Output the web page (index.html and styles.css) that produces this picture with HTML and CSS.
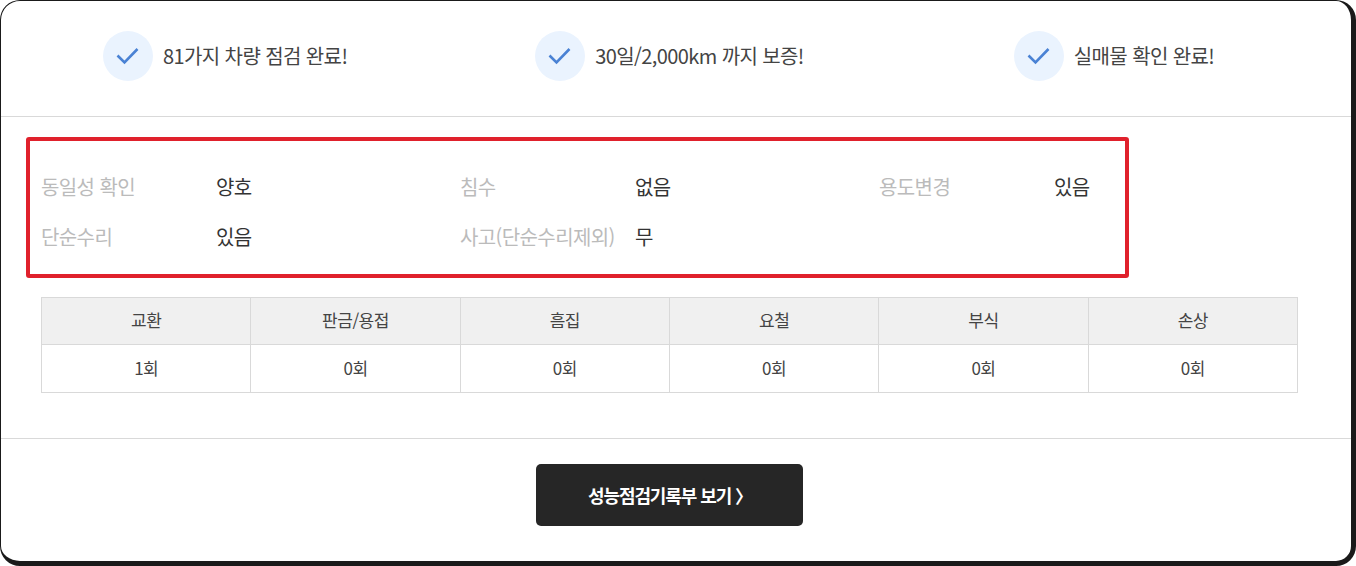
FILE: index.html
```html
<!DOCTYPE html>
<html lang="ko">
<head>
<meta charset="utf-8">
<title>성능점검</title>
<link rel="stylesheet" href="styles.css">
</head>
<body>
<div class="card">
  <div class="checks">
    <div class="check check-a"><span class="tick"><svg width="24" height="18" viewBox="0 0 24 18"><path d="M1.5 8.5l7 7L21.5 2" fill="none" stroke="#4a82d4" stroke-width="2.6"/></svg></span><span>81가지 차량 점검 완료!</span></div>
    <div class="check check-b"><span class="tick"><svg width="24" height="18" viewBox="0 0 24 18"><path d="M1.5 8.5l7 7L21.5 2" fill="none" stroke="#4a82d4" stroke-width="2.6"/></svg></span><span>30일/2,000km 까지 보증!</span></div>
    <div class="check check-c"><span class="tick"><svg width="24" height="18" viewBox="0 0 24 18"><path d="M1.5 8.5l7 7L21.5 2" fill="none" stroke="#4a82d4" stroke-width="2.6"/></svg></span><span>실매물 확인 완료!</span></div>
  </div>
  <div class="detail">
    <div class="highlight"></div>
    <dl class="facts">
      <div class="fact"><dt>동일성 확인</dt><dd>양호</dd></div>
      <div class="fact"><dt>침수</dt><dd>없음</dd></div>
      <div class="fact"><dt>용도변경</dt><dd>있음</dd></div>
      <div class="fact"><dt>단순수리</dt><dd>있음</dd></div>
      <div class="fact"><dt>사고(단순수리제외)</dt><dd>무</dd></div>
    </dl>
    <table class="parts">
      <tr><th>교환</th><th>판금/용접</th><th>흠집</th><th>요철</th><th>부식</th><th>손상</th></tr>
      <tr><td>1회</td><td>0회</td><td>0회</td><td>0회</td><td>0회</td><td>0회</td></tr>
    </table>
  </div>
  <div class="action"><a class="report" href="#">성능점검기록부 보기 〉</a></div>
</div>
</body>
</html>
```
FILE: styles.css
```css
* { box-sizing: border-box; }
html, body { margin: 0; padding: 0; }
body { background: #fff; font-family: "Noto Sans CJK KR", "Noto Sans", sans-serif; color: #222; }
.card {
  width: 1356px; height: 566px;
  border: solid #1a1a1a; border-width: 1px 5px 5px 1px;
  border-radius: 20px;
  background: #fff;
  overflow: hidden;
}
.checks {
  display: flex; align-items: center;
  height: 116px; padding: 0 0 6px 102px;
  border-bottom: 1px solid #d9d9d9;
  font-size: 20px; letter-spacing: -0.6px; color: #444;
}
.check { display: flex; align-items: center; gap: 10px; }
.check-b { margin-left: 188px; }
.check-c { margin-left: 210px; }
.tick {
  width: 50px; height: 50px; border-radius: 50%;
  background: #eaf3fe;
  display: flex; align-items: center; justify-content: center;
}
.detail { position: relative; height: 322px; padding: 44px 0 0 40px; border-bottom: 1px solid #d9d9d9; }
.highlight {
  position: absolute; left: 25px; top: 20px;
  width: 1103px; height: 141px;
  border: 4px solid #e0212c; border-radius: 3px;
}
.facts { display: grid; grid-template-columns: repeat(3, 419px); grid-auto-rows: 50px; margin: 0; font-size: 20px; letter-spacing: -0.6px; }
.fact { display: flex; align-items: center; }
.fact dt { width: 175px; color: #bbb; }
.fact dd { margin: 0; color: #333; }
.parts {
  width: 1257px; margin-top: 36px;
  border-collapse: collapse; table-layout: fixed;
  font-size: 17px; letter-spacing: -0.5px; color: #444;
}
.parts th, .parts td { height: 48px; padding: 0 0 3px; border: 1px solid #d9d9d9; text-align: center; font-weight: 400; }
.parts th { height: 47px; background: #f0f0f0; }
.action { display: flex; justify-content: center; padding: 25px 14px 0 0; }
.report {
  display: flex; align-items: center; justify-content: center;
  width: 267px; height: 62px; padding-left: 2px; border-radius: 5px;
  background: #262626; color: #fff; text-decoration: none;
  font-size: 18px; font-weight: 700; letter-spacing: -1.1px;
}
```
